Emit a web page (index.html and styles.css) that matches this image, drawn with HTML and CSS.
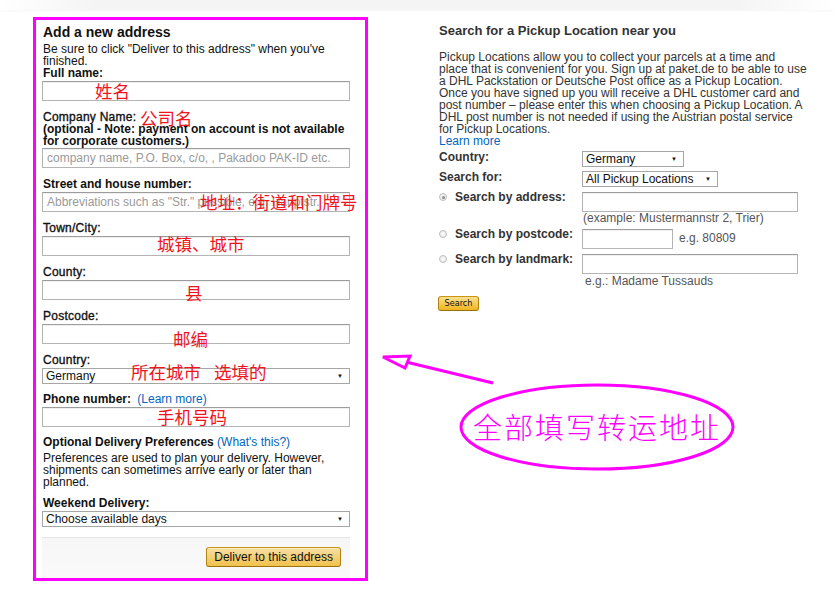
FILE: index.html
```html
<!DOCTYPE html>
<html lang="en">
<head>
<meta charset="utf-8">
<title>Add a new address</title>
<link rel="stylesheet" href="styles.css">
</head>
<body>
<div class="screen">
  <div class="topbar"></div>
  <div class="page">
    <form class="panel">
      <h2 class="title">Add a new address</h2>
      <p class="desc">Be sure to click "Deliver to this address" when you've finished.</p>

      <div class="field">
        <label class="lbl">Full name:</label>
        <input class="input" type="text">
        <span class="note" style="left:53px;top:16px">姓名</span>
      </div>

      <div class="field field-company">
        <label class="lbl lbl-company"><span class="medium">Company Name:</span><br>(optional - Note: payment on account is not available for corporate customers.)</label>
        <input class="input" type="text" placeholder="company name, P.O. Box, c/o, , Pakadoo PAK-ID etc.">
        <span class="note" style="left:98px;top:-1px">公司名</span>
      </div>

      <div class="field">
        <label class="lbl">Street and house number:</label>
        <input class="input" type="text" placeholder="Abbreviations such as &quot;Str.&quot; possible, e.g. Hauptstr.">
        <span class="note" style="left:158px;top:16px">地址：街道和门牌号</span>
      </div>

      <div class="field">
        <label class="lbl lbl-medium">Town/City:</label>
        <input class="input" type="text">
        <span class="note" style="left:115px;top:14px">城镇、城市</span>
      </div>

      <div class="field">
        <label class="lbl lbl-medium">County:</label>
        <input class="input" type="text">
        <span class="note" style="left:143px;top:19px">县</span>
      </div>

      <div class="field">
        <label class="lbl lbl-medium">Postcode:</label>
        <input class="input" type="text">
        <span class="note" style="left:131px;top:21px">邮编</span>
      </div>

      <div class="field field-select">
        <label class="lbl lbl-medium">Country:</label>
        <div class="select"><span>Germany</span><span class="arrow">▼</span></div>
        <span class="note" style="left:89px;top:10px">所在城市<span class="note-gap"></span>选填的</span>
      </div>

      <div class="field field-select">
        <label class="lbl">Phone number: <a class="link link-gap">(Learn more)</a></label>
        <input class="input" type="text">
        <span class="note" style="left:115px;top:16px">手机号码</span>
      </div>

      <div class="prefs">
        <div class="lbl">Optional Delivery Preferences <a class="link">(What's this?)</a></div>
        <p class="prefs-text">Preferences are used to plan your delivery. However, shipments can sometimes arrive early or later than planned.</p>
      </div>

      <div class="field field-last">
        <label class="lbl">Weekend Delivery:</label>
        <div class="select"><span>Choose available days</span><span class="arrow">▼</span></div>
      </div>

      <div class="footer">
        <button type="button" class="btn-deliver">Deliver to this address</button>
      </div>
    </form>

    <section class="side">
      <h3 class="side-title">Search for a Pickup Location near you</h3>
      <p class="intro">Pickup Locations allow you to collect your parcels at a time and<br>place that is convenient for you. Sign up at paket.de to be able to use<br>a DHL Packstation or Deutsche Post office as a Pickup Location.<br>Once you have signed up you will receive a DHL customer card and<br>post number – please enter this when choosing a Pickup Location. A<br>DHL post number is not needed if using the Austrian postal service<br>for Pickup Locations.<br><a class="link">Learn more</a></p>

      <div class="srow srow-first">
        <span class="slbl">Country:</span>
        <div class="select sel-country"><span>Germany</span><span class="arrow">▼</span></div>
      </div>
      <div class="srow">
        <span class="slbl">Search for:</span>
        <div class="select sel-type"><span>All Pickup Locations</span><span class="arrow">▼</span></div>
      </div>
      <div class="srow srow-radio">
        <span class="slbl"><span class="radio checked"></span>Search by address:</span>
        <input class="input in-wide" type="text">
      </div>
      <div class="hint">(example: Mustermannstr 2, Trier)</div>
      <div class="srow srow-radio">
        <span class="slbl"><span class="radio"></span>Search by postcode:</span>
        <input class="input in-short" type="text">
        <span class="eg">e.g. 80809</span>
      </div>
      <div class="srow srow-radio">
        <span class="slbl"><span class="radio"></span>Search by landmark:</span>
        <input class="input in-wide" type="text">
      </div>
      <div class="hint hint-landmark">e.g.: Madame Tussauds</div>
      <button type="button" class="btn-search">Search</button>
    </section>
  </div>

  <svg class="annot" width="835" height="591" viewBox="0 0 835 591">
    <line x1="493" y1="383" x2="406" y2="362" stroke="#f0f" stroke-width="3"/>
    <polygon points="383,357 410,356 405,368" fill="#fff" stroke="#f0f" stroke-width="3" stroke-linejoin="miter"/>
    <ellipse cx="597" cy="427" rx="136" ry="42" fill="none" stroke="#f0f" stroke-width="3"/>
    <text x="473" y="439" class="annot-text">全部填写转运地址</text>
  </svg>
</div>
</body>
</html>
```

FILE: styles.css
```css
* { box-sizing: border-box; }

body {
  margin: 0;
  background: #fff;
  font-family: "Liberation Sans", Arial, sans-serif;
  font-size: 12px;
  color: #111;
}

.screen {
  position: relative;
  width: 835px;
  height: 591px;
  overflow: hidden;
}

.topbar {
  height: 10px;
  background: linear-gradient(to right, #fff 0%, #f4f4f4 12%, #f4f4f4 88%, #fff 100%);
  box-shadow: 0 1px 2px rgba(0, 0, 0, 0.04);
}

.page {
  display: flex;
  align-items: flex-start;
  padding: 7px 0 0 33px;
}

/* ---------- left panel ---------- */
.panel {
  width: 335px;
  border: 3px solid #f0f;
  padding: 3px 15px 0 6px;
  margin: 0;
}

.title {
  margin: 0 0 2px 1px;
  font-size: 14px;
  line-height: 18px;
  font-weight: bold;
  color: #111;
}

.desc {
  margin: 0 0 -1px 1px;
  line-height: 12px;
  color: #111;
}

.field {
  position: relative;
  margin-bottom: 9px;
}

.field-select { margin-bottom: 8px; }
.field-last { margin-bottom: 10px; }

.lbl {
  display: block;
  margin: 0 0 1px 1px;
  font-weight: bold;
  line-height: 14px;
  color: #111;
}

.lbl-medium,
.medium {
  font-weight: normal;
  letter-spacing: 0.25px;
  -webkit-text-stroke: 0.35px #111;
}

.lbl-company {
  padding-top: 1px;
  line-height: 12px;
}

.input {
  display: block;
  width: 100%;
  height: 20px;
  margin: 0;
  padding: 0 4px;
  border: 1px solid #b4b4b4;
  border-top-color: #9c9c9c;
  border-radius: 0;
  background: #fff;
  box-shadow: inset 0 1px 0 rgba(0, 0, 0, 0.06);
  font-family: "Liberation Sans", Arial, sans-serif;
  font-size: 12px;
  color: #111;
}

.input::placeholder { color: #9a9a9a; }

.select {
  display: flex;
  align-items: center;
  justify-content: space-between;
  height: 16px;
  padding: 0 6px 0 3px;
  border: 1px solid #a6a6a6;
  background: #fff;
  font-size: 12px;
  line-height: 14px;
  color: #111;
}

.arrow {
  font-size: 6px;
  line-height: 6px;
  color: #111;
}

.note {
  position: absolute;
  white-space: nowrap;
  font-family: "Noto Sans CJK SC", sans-serif;
  font-size: 17.5px;
  line-height: 1;
  color: #f0141e;
  pointer-events: none;
}

.note-gap {
  display: inline-block;
  width: 13px;
}

.link {
  font-weight: normal;
  color: #0066c0;
  text-decoration: none;
}

.link-gap { margin-left: 3px; }

.prefs { margin-bottom: 8px; }

.prefs .lbl { margin-bottom: 3px; }

.prefs-text {
  margin: 0 0 0 1px;
  line-height: 12px;
  color: #111;
}

.footer {
  display: flex;
  justify-content: flex-end;
  padding: 9px 9px 11px 0;
  border-top: 1px solid #e6e6e6;
  background: linear-gradient(#f6f6f6, #fafafa);
}

.btn-deliver {
  height: 20px;
  padding: 0 7px;
  border: 1px solid;
  border-color: #c89411 #b0820f #99710d;
  border-radius: 3px;
  background: linear-gradient(#f7dfa5, #f0c14b);
  box-shadow: inset 0 1px 0 rgba(255, 255, 255, 0.4);
  font-family: "Liberation Sans", Arial, sans-serif;
  font-size: 12px;
  color: #111;
}

/* ---------- right column ---------- */
.side {
  width: 385px;
  margin-left: 71px;
  color: #333;
}

.side-title {
  margin: 6px 0 0 0;
  font-size: 13px;
  line-height: 16px;
  font-weight: bold;
  color: #333;
}

.intro {
  margin: 12px 0 0 0;
  line-height: 12px;
  color: #333;
  white-space: nowrap;
}

.srow {
  display: flex;
  align-items: flex-start;
  margin-top: 4px;
}

.srow-first { margin-top: 4px; }

.slbl {
  display: flex;
  align-items: center;
  width: 143px;
  flex: none;
  font-weight: bold;
  line-height: 12px;
  color: #333;
}

.srow-radio { margin-top: 5px; }
.srow-radio .slbl { margin-top: -1px; }

.radio {
  display: inline-block;
  width: 8px;
  height: 8px;
  margin: 0 8px 0 0;
  border: 1px solid #bdbdbd;
  border-radius: 50%;
  background: radial-gradient(circle, #fdfdfd, #e6e6e6);
  position: relative;
}

.radio.checked::after {
  content: "";
  position: absolute;
  left: 1.5px;
  top: 1.5px;
  width: 3px;
  height: 3px;
  border-radius: 50%;
  background: #8a8a8a;
}

.sel-country { width: 102px; }
.sel-type { width: 136px; }

.in-wide { width: 216px; }
.in-short { width: 91px; }

.eg {
  margin-left: 6px;
  line-height: 19px;
  color: #555;
}

.hint {
  margin-left: 144px;
  line-height: 12px;
  color: #555;
}

.hint-landmark { margin-left: 146px; padding-top: 1px; }

.btn-search {
  display: block;
  width: 41px;
  height: 15px;
  margin: 9px 0 0 -1px;
  padding: 0;
  border: 1px solid;
  border-color: #c89411 #b0820f #99710d;
  border-radius: 3px;
  background: linear-gradient(#fbe08e, #f0b51f);
  font-family: "DejaVu Sans Condensed", "Liberation Sans Narrow", sans-serif;
  font-size: 9px;
  line-height: 13px;
  color: #111;
}

/* ---------- annotation overlay ---------- */
.annot {
  position: absolute;
  left: 0;
  top: 0;
  pointer-events: none;
}

.annot-text {
  font-family: "Noto Sans CJK SC", sans-serif;
  font-size: 29px;
  font-weight: 300;
  letter-spacing: 2px;
  fill: #f0f;
}
```
